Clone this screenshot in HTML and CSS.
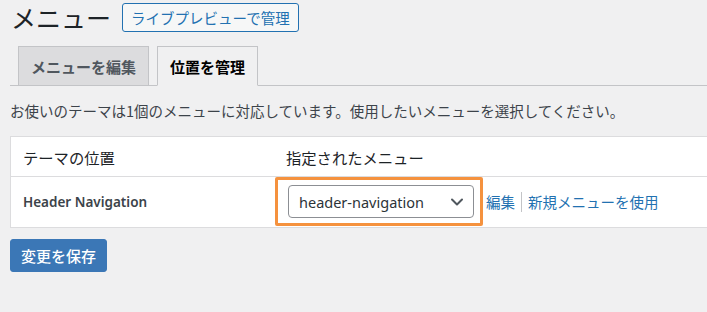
FILE: index.html
```html
<!DOCTYPE html>
<html lang="ja">
<head>
<meta charset="utf-8">
<title>メニュー</title>
<link rel="stylesheet" href="styles.css">
</head>
<body>
<div class="wrap">
  <div class="head">
    <h1 class="title">メニュー</h1>
    <a class="btn-outline" href="#">ライブプレビューで管理</a>
  </div>
  <nav class="tabs">
    <a class="tab" href="#">メニューを編集</a>
    <a class="tab tab-active" href="#">位置を管理</a>
  </nav>
  <p class="desc">お使いのテーマは1個のメニューに対応しています。使用したいメニューを選択してください。</p>
  <div class="table-clip">
    <table class="loc-table">
      <thead>
        <tr>
          <th class="col-loc">テーマの位置</th>
          <th class="col-menu">指定されたメニュー</th>
        </tr>
      </thead>
      <tbody>
        <tr>
          <td class="loc-name">Header Navigation</td>
          <td class="loc-menu">
            <div class="menu-cell">
              <div class="highlight">
                <div class="select">
                  <span class="select-text">header-navigation</span>
                  <svg class="chev" width="20" height="20" viewBox="0 0 20 20"><polyline points="5,7.5 10,12.5 15,7.5" fill="none" stroke="#50575e" stroke-width="2" stroke-linecap="round" stroke-linejoin="round"/></svg>
                </div>
              </div>
              <a class="link link-first" href="#">編集</a>
              <span class="sep"></span>
              <a class="link" href="#">新規メニューを使用</a>
            </div>
          </td>
        </tr>
      </tbody>
    </table>
  </div>
  <button class="btn-primary" type="button">変更を保存</button>
</div>
</body>
</html>
```
FILE: styles.css
```css
html, body {
  margin: 0;
  padding: 0;
  overflow: hidden;
}
body {
  background: #f0f0f1;
  font-family: "Noto Sans", "Noto Sans CJK JP", sans-serif;
  color: #3c434a;
  width: 707px;
  height: 312px;
}
.wrap {
  padding-left: 10px;
}
.head {
  display: flex;
  align-items: center;
  margin-top: 3px;
  height: 28px;
}
.title {
  margin: 0 11px 0 1px;
  font-size: 25px;
  font-weight: 400;
  line-height: 28px;
  color: #1d2327;
  font-family: "Noto Sans CJK JP", sans-serif;
}
.btn-outline {
  display: inline-flex;
  align-items: center;
  box-sizing: border-box;
  height: 29px;
  padding: 0 8px;
  border: 1px solid #2271b1;
  border-radius: 3px;
  background: #f6f7f7;
  color: #2271b1;
  font-size: 14.5px;
  text-decoration: none;
  font-family: "Noto Sans CJK JP", sans-serif;
}
.tabs {
  display: flex;
  gap: 8px;
  margin-top: 15px;
  padding-left: 8px;
  border-bottom: 1px solid #c3c4c7;
  height: 39px;
}
.tab {
  display: flex;
  align-items: center;
  box-sizing: border-box;
  height: 40px;
  padding: 0 12px;
  border: 1px solid #c3c4c7;
  background: #dcdcde;
  color: #50575e;
  font-size: 15px;
  font-weight: 700;
  text-decoration: none;
  font-family: "Noto Sans CJK JP", sans-serif;
}
.tab-active {
  background: #f0f0f1;
  color: #000;
  border-bottom-color: #f0f0f1;
}
.desc {
  margin: 15px 0 0;
  font-size: 14.5px;
  line-height: 20px;
  color: #3c434a;
  font-family: "Noto Sans CJK JP", sans-serif;
}
.table-clip {
  margin-top: 15px;
  overflow: hidden;
}
.loc-table {
  width: 760px;
  border-collapse: collapse;
  background: #fff;
  border: 1px solid #dcdcde;
}
.loc-table th {
  height: 39px;
  padding: 0;
  text-align: left;
  font-weight: 400;
  font-size: 15.3px;
  color: #1d2327;
  border-bottom: 1px solid #dcdcde;
  font-family: "Noto Sans CJK JP", sans-serif;
}
.col-loc {
  width: 252px;
  padding-left: 12px !important;
}
.col-menu {
  padding-left: 11px !important;
}
.loc-table td {
  height: 50px;
  padding: 0;
  vertical-align: top;
}
.loc-name {
  padding-left: 12px !important;
  vertical-align: middle !important;
  font-size: 13.5px;
  font-weight: 600;
  color: #3c434a;
}
.menu-cell {
  display: flex;
  align-items: center;
}
.highlight {
  border: 3px solid #f5923e;
  border-radius: 2px;
  padding: 5px 6px 5px 10px;
}
.select {
  box-sizing: border-box;
  width: 186px;
  height: 33px;
  border: 1px solid #8c8f94;
  border-radius: 4px;
  background: #fff;
  display: flex;
  align-items: center;
  justify-content: space-between;
  padding: 0 6px 0 10px;
}
.select-text {
  font-size: 14.5px;
  color: #2c3338;
}
.chev {
  display: block;
}
.link {
  color: #2271b1;
  font-size: 14.5px;
  text-decoration: none;
  font-family: "Noto Sans CJK JP", sans-serif;
}
.link-first {
  margin-left: 3px;
}
.sep {
  width: 1px;
  height: 20px;
  background: #c3c4c7;
  margin: 0 6px;
}
.btn-primary {
  display: block;
  margin-top: 11px;
  box-sizing: border-box;
  height: 33px;
  padding: 0 10px;
  border: 1px solid #3b77b6;
  border-radius: 3px;
  background: #3b77b6;
  color: #fff;
  font-size: 15px;
  font-weight: 500;
  font-family: "Noto Sans CJK JP", sans-serif;
}
```
